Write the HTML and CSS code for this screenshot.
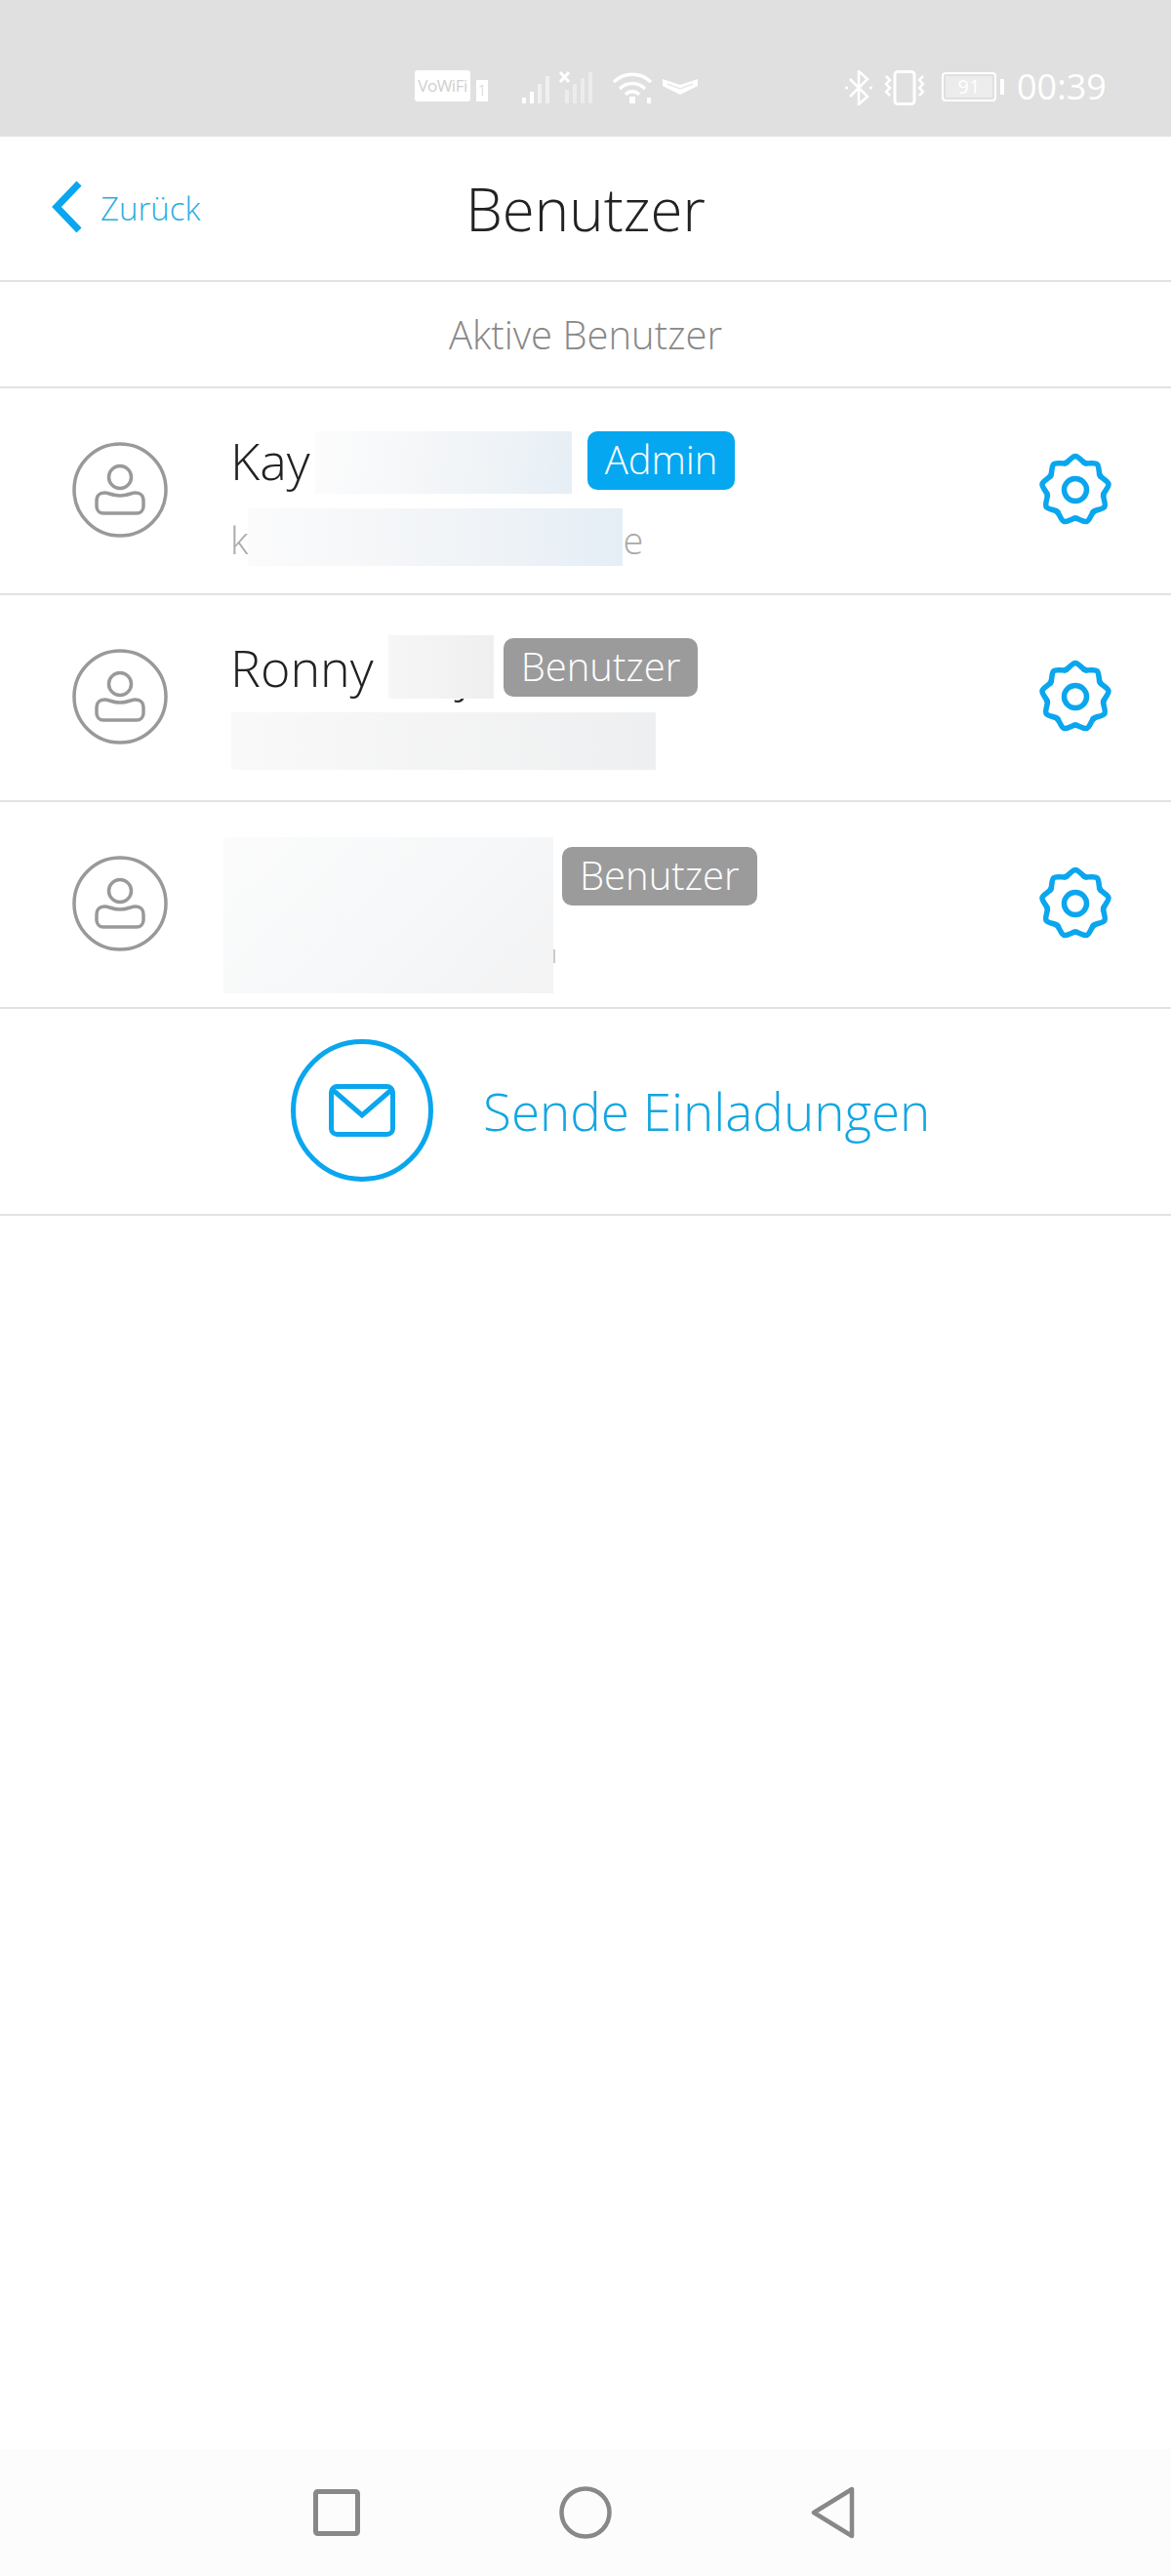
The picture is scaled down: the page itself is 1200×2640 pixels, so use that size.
FILE: index.html
```html
<!DOCTYPE html>
<html lang="de">
<head>
    <meta charset="UTF-8">
    <meta name="viewport" content="width=device-width, initial-scale=1.0">
    <title>Benutzer</title>
    <link rel="stylesheet" href="styles.css">
</head>
<body>
    <svg class="defs" width="0" height="0">
        <symbol id="avatar" viewBox="0 0 98 98">
            <circle cx="49" cy="49" r="47" fill="none" stroke="#999" stroke-width="3.5"/>
            <circle cx="49" cy="36" r="11.5" fill="none" stroke="#999" stroke-width="3.5"/>
            <path d="M33 52c5 0 8 3 16 3s11-3 16-3c5 0 8 3 8 8v6c0 4-3 7-7 7H32c-4 0-7-3-7-7v-6c0-5 3-8 8-8z" fill="none" stroke="#999" stroke-width="3.5"/>
        </symbol>
        <symbol id="lobe" viewBox="0 0 76 76">
            <path d="M27 11C31 10 34.500 3.500 38 3.500S45 10 49 11" fill="none" stroke="#0aa6ee" stroke-width="5.500" stroke-linecap="round"/>
        </symbol>
        <symbol id="gear" viewBox="0 0 76 76">
            <use href="#lobe" width="76" height="76"/>
            <use href="#lobe" width="76" height="76" transform="rotate(40 38 38)"/>
            <use href="#lobe" width="76" height="76" transform="rotate(80 38 38)"/>
            <use href="#lobe" width="76" height="76" transform="rotate(120 38 38)"/>
            <use href="#lobe" width="76" height="76" transform="rotate(160 38 38)"/>
            <use href="#lobe" width="76" height="76" transform="rotate(200 38 38)"/>
            <use href="#lobe" width="76" height="76" transform="rotate(240 38 38)"/>
            <use href="#lobe" width="76" height="76" transform="rotate(280 38 38)"/>
            <use href="#lobe" width="76" height="76" transform="rotate(320 38 38)"/>
            <circle cx="38" cy="38" r="11.500" fill="none" stroke="#0aa6ee" stroke-width="5.500"/>
        </symbol>
    </svg>

    <div class="status-bar">
        <span class="vowifi">VoWiFi</span>
        <span class="sim">1</span>
        <svg class="signal" width="92" height="36" viewBox="0 0 92 36">
            <rect x="2" y="28" width="4" height="6" fill="#fff"/>
            <rect x="10" y="22" width="4" height="12" fill="#fff"/>
            <rect x="18" y="14" width="4" height="20" fill="#fff" opacity=".5"/>
            <rect x="26" y="6" width="4" height="28" fill="#fff" opacity=".5"/>
            <rect x="46" y="20" width="4" height="14" fill="#fff" opacity=".4"/>
            <rect x="54" y="14" width="4" height="20" fill="#fff" opacity=".4"/>
            <rect x="62" y="8" width="4" height="26" fill="#fff" opacity=".4"/>
            <rect x="70" y="2" width="4" height="32" fill="#fff" opacity=".4"/>
            <path d="M41 2l9 10M50 2l-9 10" stroke="#fff" stroke-width="3"/>
        </svg>
        <svg class="wifi" width="42" height="34" viewBox="0 0 42 34">
            <path d="M2 12a27 27 0 0 1 38 0M8 19a18 18 0 0 1 26 0M14 25a9 9 0 0 1 14 0" fill="none" stroke="#fff" stroke-width="3.500"/>
            <rect x="18" y="27" width="6" height="7" fill="#fff"/>
            <rect x="36" y="28" width="4" height="6" fill="#fff"/>
        </svg>
        <svg class="hotspot" width="38" height="18" viewBox="0 0 38 18">
            <path d="M1 1l18 6 18-6v7L19 17 1 8z" fill="#fff"/>
            <path d="M6 6l13 5 13-5" fill="none" stroke="#e8e8e8" stroke-width="1.500"/>
        </svg>
        <svg class="bluetooth" width="30" height="36" viewBox="0 0 30 36">
            <path d="M6 9l18 18-9 8V1l9 8L6 27" fill="none" stroke="#fff" stroke-width="2.500"/>
            <path d="M1 18h3M26 18h3" stroke="#fff" stroke-width="2.500"/>
        </svg>
        <svg class="vibrate" width="48" height="36" viewBox="0 0 48 36">
            <rect x="14" y="1.500" width="20" height="33" rx="3" fill="none" stroke="#fff" stroke-width="3"/>
            <path d="M5 6l4 4-4 4 4 4-4 4 4 4M43 6l-4 4 4 4-4 4 4 4-4 4" fill="none" stroke="#fff" stroke-width="2.500"/>
        </svg>
        <span class="battery"><span class="battery-level">91</span></span>
        <span class="clock">00:39</span>
    </div>

    <div class="top-bar">
        <a class="back">
            <svg width="34" height="54" viewBox="0 0 34 54">
                <path d="M29 3L6 27l23 24" fill="none" stroke="#0aa6ee" stroke-width="7"/>
            </svg>
            <span>Zurück</span>
        </a>
        <h1>Benutzer</h1>
    </div>

    <div class="section-title">Aktive Benutzer</div>

    <div class="user-row">
        <svg class="avatar"><use href="#avatar"/></svg>
        <div class="user-info">
            <div class="name-line">
                <span class="name">Kay</span>
                <span class="mask mask-kay"></span>
                <span class="badge badge-admin">Admin</span>
            </div>
            <div class="email-line">
                <span class="email">k</span>
                <span class="mask mask-kay-mail"></span>
                <span class="email">e</span>
            </div>
        </div>
        <svg class="gear"><use href="#gear"/></svg>
    </div>

    <div class="user-row">
        <svg class="avatar"><use href="#avatar"/></svg>
        <div class="user-info">
            <div class="name-line">
                <span class="name">Ronny</span>
                <span class="surname">y<span class="mask mask-ronny"></span></span>
                <span class="badge">Benutzer</span>
            </div>
            <div class="email-line">
                <span class="mask mask-ronny-mail"></span>
            </div>
        </div>
        <svg class="gear"><use href="#gear"/></svg>
    </div>

    <div class="user-row">
        <svg class="avatar"><use href="#avatar"/></svg>
        <div class="user-info user-info-hidden">
            <span class="mask mask-third"></span>
            <span class="badge">Benutzer</span>
        </div>
        <svg class="gear"><use href="#gear"/></svg>
    </div>

    <div class="invite-row">
        <span class="invite-icon">
            <svg width="68" height="54" viewBox="0 0 68 54">
                <rect x="2.500" y="2.500" width="63" height="49" rx="6" fill="none" stroke="#0aa6ee" stroke-width="5"/>
                <path d="M4 6l30 26L64 6" fill="none" stroke="#0aa6ee" stroke-width="5"/>
            </svg>
        </span>
        <span class="invite-text">Sende Einladungen</span>
    </div>

    <div class="spacer"></div>

    <div class="nav-bar">
        <svg width="48" height="48" viewBox="0 0 48 48">
            <rect x="2.500" y="2.500" width="43" height="43" rx="2" fill="none" stroke="#888" stroke-width="5"/>
        </svg>
        <svg width="54" height="54" viewBox="0 0 54 54">
            <circle cx="27" cy="27" r="24.500" fill="none" stroke="#888" stroke-width="4.500"/>
        </svg>
        <svg width="46" height="54" viewBox="0 0 46 54">
            <path d="M42 3v48L3 27z" fill="none" stroke="#888" stroke-width="4.500" stroke-linejoin="round"/>
        </svg>
    </div>
</body>
</html>
```

FILE: styles.css
```css
body {
    margin: 0;
    height: 2640px;
    display: flex;
    flex-direction: column;
    background-color: white;
    font-family: 'Open Sans', sans-serif;
    font-weight: 300;
    color: #222;
}
.defs {
    position: absolute;
}
.status-bar {
    height: 140px;
    flex: none;
    box-sizing: border-box;
    padding: 72px 64px 0 425px;
    display: flex;
    align-items: flex-start;
    background-color: #e0e0e0;
    color: white;
}
.vowifi {
    width: 57px;
    height: 32px;
    background-color: white;
    border-radius: 3px;
    color: #cfcfcf;
    font-size: 17px;
    font-weight: 400;
    letter-spacing: -0.5px;
    line-height: 32px;
    text-align: center;
}
.sim {
    width: 12px;
    height: 22px;
    margin: 10px 0 0 6px;
    background-color: white;
    color: #ccc;
    font-size: 14px;
    line-height: 22px;
    text-align: center;
}
.signal {
    margin-left: 33px;
}
.wifi {
    margin-left: 2px;
}
.hotspot {
    margin: 8px 0 0 9px;
}
.bluetooth {
    margin-left: 149px;
}
.vibrate {
    margin-left: 8px;
}
.battery {
    width: 56px;
    height: 30px;
    margin: 2px 0 0 14px;
    box-sizing: border-box;
    border: 2px solid white;
    border-radius: 4px;
    padding: 2px;
    position: relative;
}
.battery::after {
    content: "";
    position: absolute;
    right: -10px;
    top: 5px;
    width: 4px;
    height: 16px;
    background-color: white;
}
.battery-level {
    display: block;
    height: 22px;
    background-color: #ececec;
    font-size: 20px;
    font-weight: 400;
    line-height: 22px;
    text-align: center;
}
.clock {
    margin-left: 21px;
    font-size: 36px;
    font-weight: 400;
    line-height: 34px;
}
.top-bar {
    height: 147px;
    flex: none;
    position: relative;
    border-bottom: 2px solid #e2e2e2;
    display: flex;
    align-items: center;
    justify-content: center;
}
.top-bar h1 {
    margin: 0;
    font-size: 60px;
    font-weight: 300;
    color: #222;
}
.back {
    position: absolute;
    left: 52px;
    top: 47px;
    display: flex;
    align-items: center;
    gap: 17px;
    color: #29aee0;
    font-size: 33px;
}
.back svg {
    margin-top: -2px;
}
.section-title {
    height: 107px;
    flex: none;
    border-bottom: 2px solid #e2e2e2;
    font-size: 40px;
    line-height: 107px;
    text-align: center;
    color: #888;
}
.user-row {
    height: 210px;
    flex: none;
    border-bottom: 2px solid #e2e2e2;
    display: flex;
    padding-left: 74px;
    padding-right: 60px;
}
.avatar {
    width: 98px;
    height: 98px;
    flex: none;
    align-self: center;
    margin-bottom: 3px;
}
.gear {
    width: 76px;
    height: 76px;
    flex: none;
    align-self: center;
    margin-left: auto;
    margin-bottom: 2px;
}
.user-info {
    margin-left: 64px;
    padding-top: 44px;
}
.name-line {
    display: flex;
    align-items: flex-start;
    height: 64px;
}
.name {
    font-size: 52px;
    line-height: 60px;
}
.surname {
    position: relative;
    width: 108px;
    margin-left: 15px;
    font-size: 52px;
    line-height: 68px;
    text-align: right;
    padding-right: 16px;
    box-sizing: border-box;
}
.email-line {
    display: flex;
    align-items: flex-start;
    margin-top: 15px;
    height: 59px;
}
.email {
    font-size: 38px;
    line-height: 65px;
    color: #aaa;
}
.badge {
    margin: 0 0 0 10px;
    height: 60px;
    padding: 0 18px;
    border-radius: 10px;
    background-color: #9b9b9b;
    color: white;
    font-size: 40px;
    line-height: 58px;
}
.badge-admin {
    background-color: #05a8f0;
    margin-left: 16px;
}
.mask {
    display: block;
}
.mask-kay {
    width: 263px;
    height: 64px;
    margin-left: 5px;
    background: linear-gradient(100deg, #fcfcfc, #f1f4f7 60%, #e6eff6);
}
.mask-kay-mail {
    width: 384px;
    height: 59px;
    background: linear-gradient(90deg, #fbfbfc, #f1f4f7 55%, #e5eef6);
}
.mask-ronny {
    position: absolute;
    left: 0;
    top: -3px;
    width: 108px;
    height: 65px;
    background: linear-gradient(90deg, #f6f6f6, #efefef);
}
.mask-ronny-mail {
    width: 435px;
    height: 59px;
    margin-top: -3px;
    margin-left: 1px;
    background: linear-gradient(90deg, #f9f9f9, #eeeff0);
}
.user-info-hidden {
    display: flex;
    align-items: flex-start;
    margin-left: 57px;
    padding-top: 36px;
}
.user-info-hidden .badge {
    margin: 10px 0 0 9px;
}
.mask-third {
    position: relative;
    width: 338px;
    height: 160px;
    background: linear-gradient(135deg, #fbfbfb, #f6f8f9 50%, #f3f3f4);
}
.mask-third::after {
    content: "";
    position: absolute;
    right: -2px;
    top: 115px;
    width: 2px;
    height: 14px;
    background-color: #ccc;
}
.invite-row {
    height: 210px;
    flex: none;
    border-bottom: 2px solid #e2e2e2;
    display: flex;
    align-items: center;
    padding-left: 298px;
}
.invite-icon {
    width: 146px;
    height: 146px;
    box-sizing: border-box;
    border: 5px solid #0aa6ee;
    border-radius: 50%;
    display: flex;
    align-items: center;
    justify-content: center;
    margin-bottom: 2px;
}
.invite-text {
    margin-left: 51px;
    margin-bottom: 2px;
    font-size: 53px;
    color: #12a6e2;
}
.spacer {
    flex: 1;
}
.nav-bar {
    height: 130px;
    flex: none;
    box-sizing: border-box;
    padding: 38px 323px 0 321px;
    display: flex;
    align-items: flex-start;
    justify-content: space-between;
    background-color: #fcfcfc;
}
.nav-bar svg:first-child {
    margin-top: 3px;
}
```
